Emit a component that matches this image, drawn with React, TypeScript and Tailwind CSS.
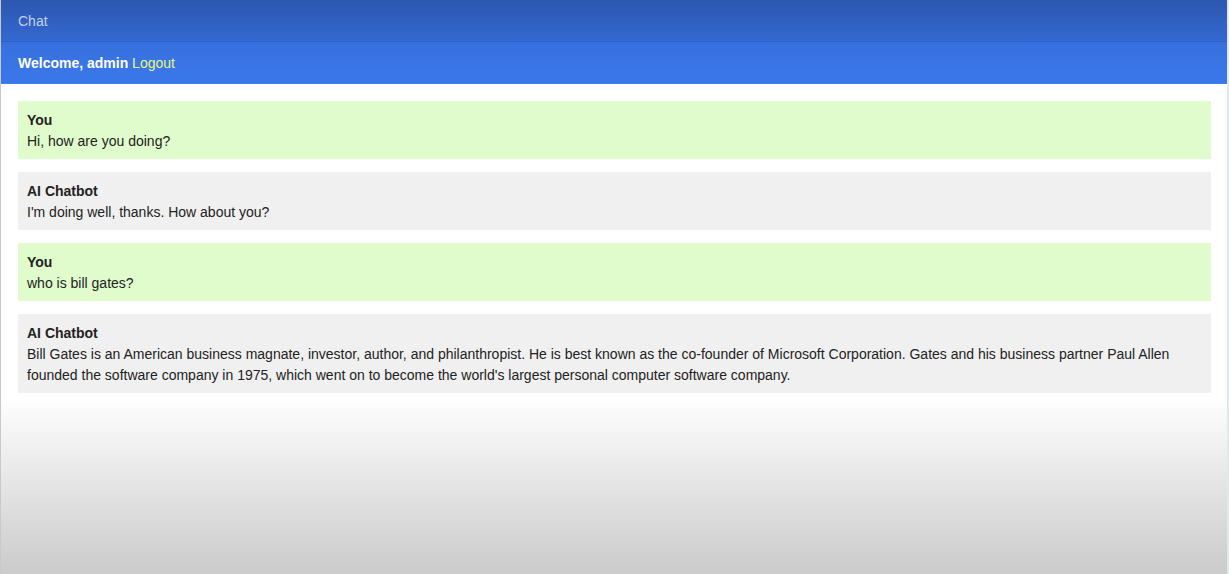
const messages = [
  { from: 'You', text: 'Hi, how are you doing?' },
  { from: 'AI Chatbot', text: "I'm doing well, thanks. How about you?" },
  { from: 'You', text: 'who is bill gates?' },
  {
    from: 'AI Chatbot',
    text: "Bill Gates is an American business magnate, investor, author, and philanthropist. He is best known as the co-founder of Microsoft Corporation. Gates and his business partner Paul Allen founded the software company in 1975, which went on to become the world's largest personal computer software company.",
  },
]

export default function App() {
  return (
    <div className="flex h-[574px] w-[1229px] bg-[#e4e8ee] font-['Liberation_Sans',Arial,sans-serif] text-[14px]">
      <div className="flex w-[1227px] flex-col border-l border-[#c9c9c9]">
        <header className="h-[42px] shrink-0 border-b border-[#2e5fbf] bg-gradient-to-b from-[#2c57ae] to-[#3468d2] pl-[17px] pt-[1px] leading-[41px] text-[#c4d1ee]">
          Chat
        </header>
        <div className="h-[42px] shrink-0 border-b border-[#3f7ff0] bg-gradient-to-b from-[#3770de] to-[#3a78ea] pl-[17px] pt-[1px] leading-[41px]">
          <span className="font-bold text-white">Welcome, admin</span>{' '}
          <a href="#" className="text-[#e9f77c]">
            Logout
          </a>
        </div>
        <main className="flex flex-col gap-[13px] bg-white pb-[4px] pl-[17px] pr-[16px] pt-[17px] text-[#222222]">
          {messages.map((m, i) => (
            <div
              key={i}
              className={`px-[9px] pb-[7px] pt-[9px] leading-[21px] ${m.from === 'You' ? 'bg-[#e0fbcc]' : 'bg-[#f0f0f0]'}`}
            >
              <div className="font-bold">{m.from}</div>
              <div>{m.text}</div>
            </div>
          ))}
        </main>
        <div className="flex-1 bg-gradient-to-b from-white to-[#cbcbcb]" />
      </div>
    </div>
  )
}
